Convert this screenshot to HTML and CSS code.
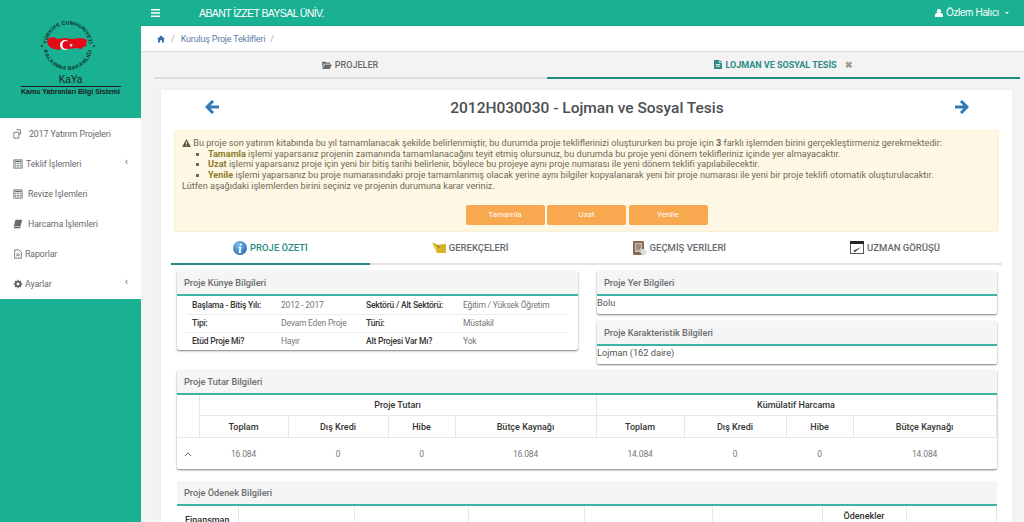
FILE: index.html
```html
<!DOCTYPE html>
<html lang="tr">
<head>
<meta charset="utf-8">
<title>Kuruluş Proje Teklifleri</title>
<link rel="stylesheet" href="styles.css">
</head>
<body>
<div class="app">
  <aside class="sidebar">
    <div class="brand">
      <svg class="emblem" viewBox="0 0 64 64" width="64" height="64">
        <defs>
          <path id="ringTop" d="M11 32.500 A21 21 0 0 1 53 32.500"/>
          <path id="ringBottom" d="M7.500 32.500 A24.500 24.500 0 0 0 56.500 32.500"/>
        </defs>
        <text class="ring-text"><textPath href="#ringTop" startOffset="50%" text-anchor="middle">TÜRKİYE CUMHURİYETİ</textPath></text>
        <text class="ring-text ring-low"><textPath href="#ringBottom" startOffset="50%" text-anchor="middle">KALKINMA BAKANLIĞI</textPath></text>
        <circle cx="6" cy="33" r="1" fill="#17352d"/>
        <circle cx="58" cy="33" r="1" fill="#17352d"/>
        <path d="M13 25l5-1 3 2 8-1 7 1 8-1 5 1 2 1-1 4 1 2-4 1-1 2-6-1-7 1-6-1-5 2-7-2-3-3-1-4z" fill="#e30a17"/>
        <circle cx="29" cy="32" r="5" fill="#fff"/>
        <circle cx="30.500" cy="32" r="4" fill="#e30a17"/>
        <path d="M35 30.200l.5 1.400 1.500 0-1.200.9.5 1.400-1.300-.9-1.200.9.5-1.400-1.200-.9 1.400 0z" fill="#fff"/>
      </svg>
      <div class="brand-name">KaYa</div>
      <div class="brand-sub">Kamu Yatırımları Bilgi Sistemi</div>
    </div>
    <nav class="menu">
      <a class="menu-item"><svg class="mi" viewBox="0 0 12 12"><path d="M4 1h5v5H7M1 4h6v7H1z" fill="none" stroke="#676a6c"/></svg><span class="gap-a">2017 Yatırım Projeleri</span></a>
      <a class="menu-item"><svg class="mi" viewBox="0 0 12 12"><path d="M1 1h10v10H1z" fill="#fff" stroke="#676a6c"/><path d="M2 2h8v2H2zM2 5h2v1H2zM5 5h2v1H5zM8 5h2v1H8zM2 7h2v1H2zM5 7h2v1H5zM8 7h2v1H8zM2 9h2v1H2zM5 9h2v1H5zM8 9h2v1H8z" fill="#676a6c"/></svg><span class="gap-b">Teklif İşlemleri</span><i class="caret">‹</i></a>
      <a class="menu-item"><svg class="mi" viewBox="0 0 12 12"><path d="M1 1h10v10H1z" fill="#fff" stroke="#676a6c"/><path d="M2 2h8v2H2zM2 5h2v1H2zM5 5h2v1H5zM8 5h2v1H8zM2 7h2v1H2zM5 7h2v1H5zM8 7h2v1H8zM2 9h2v1H2zM5 9h2v1H5zM8 9h2v1H8z" fill="#676a6c"/></svg><span class="gap-d">Revize İşlemleri</span></a>
      <a class="menu-item"><svg class="mi" viewBox="0 0 12 12"><path d="M3 1h8L9 9H1zM1 9.500h8v1.500H1z" fill="#676a6c"/></svg><span class="gap-d">Harcama İşlemleri</span></a>
      <a class="menu-item"><svg class="mi" viewBox="0 0 12 12"><path d="M2 1h5l3 3v7H2z" fill="none" stroke="#676a6c"/><path d="M4 6h4M4 8h4" stroke="#676a6c"/></svg><span class="gap-c">Raporlar</span></a>
      <a class="menu-item"><svg class="mi" viewBox="0 0 12 12"><circle cx="6" cy="6" r="2.800" fill="none" stroke="#5f6365" stroke-width="2.200"/><path d="M6 1v2M6 9v2M1 6h2M9 6h2M2.500 2.500l1.400 1.400M8.100 8.100l1.400 1.400M2.500 9.500l1.400-1.400M8.100 3.900l1.400-1.400" stroke="#5f6365" stroke-width="1.600"/></svg><span class="gap-c">Ayarlar</span><i class="caret">‹</i></a>
    </nav>
  </aside>

  <main class="main">
    <header class="topbar">
      <svg class="burger" viewBox="0 0 9 8" width="9" height="8"><path d="M0 0h9v1.600H0zM0 3.200h9v1.600H0zM0 6.400h9V8H0z" fill="#fff"/></svg>
      <span class="org">ABANT İZZET BAYSAL ÜNİV.</span>
      <span class="user">
        <svg viewBox="0 0 9 9" width="8" height="8"><circle cx="4.500" cy="2.400" r="2.400" fill="#fff"/><path d="M0 9V6.800C0 5.400 1.200 4.600 2.200 4.600h4.600C7.800 4.600 9 5.400 9 6.800V9z" fill="#fff"/></svg>
        Özlem Halıcı
        <i class="user-caret"></i>
      </span>
    </header>

    <div class="crumbs">
      <svg viewBox="0 0 10 9" width="8" height="8"><path d="M5 0L0 4.400h1.300V9h2.500V6h2.400v3h2.500V4.400H10z" fill="#3a6ea5"/></svg>
      <span class="sep">/</span>
      <a class="crumb-link">Kuruluş Proje Teklifleri</a>
      <span class="sep">/</span>
    </div>

    <div class="top-tabs">
      <a class="top-tab">
        <svg viewBox="0 0 12 10" width="10" height="8"><path d="M0 1h4l1 1h5v1.500H2.500L0 8zM3 4.500h9L9.500 10H0z" fill="#676a6c"/></svg>
        PROJELER
      </a>
      <a class="top-tab top-tab-active">
        <svg viewBox="0 0 9 10" width="8" height="9"><path d="M0 0h5.500v3H9v7H0zM6.300 0L9 2.300H6.300z" fill="#2a8c82"/><path d="M2 5h5M2 7h5" stroke="#fff"/></svg>
        LOJMAN VE SOSYAL TESİS
        <b class="tab-close">✖</b>
      </a>
    </div>

    <section class="card">
      <div class="title-row">
        <svg viewBox="0 0 14 14" width="14" height="14"><path d="M8 1L2 7l6 6M2.500 7H14" fill="none" stroke="#337ab7" stroke-width="3"/></svg>
        <h1>2012H030030 - Lojman ve Sosyal Tesis</h1>
        <svg viewBox="0 0 14 14" width="14" height="14"><path d="M6 1l6 6-6 6M11.500 7H0" fill="none" stroke="#337ab7" stroke-width="3"/></svg>
      </div>

      <div class="alert">
        <p><svg class="warn" viewBox="0 0 10 9" width="9" height="8"><path d="M5 0l5 9H0z" fill="#5f5a3f"/><path d="M5 3v3M5 7v1" stroke="#fdf7e3"/></svg> Bu proje son yatırım kitabında bu yıl tamamlanacak şekilde belirlenmiştir, bu durumda proje tekliflerinizi oluştururken bu proje için <b>3</b> farklı işlemden birini gerçekleştirmeniz gerekmektedir:</p>
        <ul>
          <li><b class="hl">Tamamla</b> işlemi yaparsanız projenin zamanında tamamlanacağını teyit etmiş olursunuz, bu durumda bu proje yeni dönem teklifleriniz içinde yer almayacaktır.</li>
          <li><b class="hl">Uzat</b> işlemi yaparsanız proje için yeni bir bitiş tarihi belirlenir, böylece bu projeye aynı proje numarası ile yeni dönem teklifi yapılabilecektir.</li>
          <li><b class="hl">Yenile</b> işlemi yaparsanız bu proje numarasındaki proje tamamlanmış olacak yerine aynı bilgiler kopyalanarak yeni bir proje numarası ile yeni bir proje teklifi otomatik oluşturulacaktır.</li>
        </ul>
        <p>Lütfen aşağıdaki işlemlerden birini seçiniz ve projenin durumuna karar veriniz.</p>
        <div class="alert-actions">
          <button class="btn">Tamamla</button>
          <button class="btn">Uzat</button>
          <button class="btn">Yenile</button>
        </div>
      </div>

      <div class="sub-tabs">
        <a class="sub-tab sub-tab-active">
          <svg viewBox="0 0 14 14" width="14" height="14"><defs><radialGradient id="infoG" cx=".4" cy=".3" r=".8"><stop offset="0" stop-color="#7fc0ee"/><stop offset="1" stop-color="#1766ad"/></radialGradient></defs><circle cx="7" cy="7" r="7" fill="url(#infoG)"/><path d="M7.800 2.500a1 1 0 1 1-.1 0zM5.500 6h3l-1 5h1v1H5.500l1-5h-1z" fill="#fff"/></svg>
          PROJE ÖZETİ
        </a>
        <a class="sub-tab">
          <svg viewBox="0 0 14 12" width="14" height="12"><path d="M0 1l5 2 9-1v9H5z" fill="#e8c93a"/><path d="M5 3l9-1v9H5z" fill="#d6b32a"/><path d="M0 0l7 4 1 2-2-1z" fill="#8a7a2a"/></svg>
          GEREKÇELERİ
        </a>
        <a class="sub-tab">
          <svg viewBox="0 0 14 14" width="14" height="14"><rect x="0" y="0" width="11" height="14" rx="1" fill="#8a6b50"/><rect x="2" y="2" width="7" height="9" fill="#c9bfae"/><path d="M3 4h5M3 6h5M3 8h4" stroke="#7a5c43"/><circle cx="10.500" cy="11" r="3" fill="#d8dde0"/></svg>
          GEÇMİŞ VERİLERİ
        </a>
        <a class="sub-tab">
          <svg viewBox="0 0 14 13" width="14" height="13"><rect x=".5" y=".5" width="13" height="12" fill="#fff" stroke="#555"/><rect width="14" height="3" fill="#23262a"/><path d="M3 10l8-4-6 5z" fill="#333"/></svg>
          UZMAN GÖRÜŞÜ
        </a>
      </div>

      <div class="tab-body">
        <div class="two-col">
          <article class="panel">
            <h2 class="panel-head">Proje Künye Bilgileri</h2>
            <table class="facts">
              <tr><th class="f1">Başlama - Bitiş Yılı:</th><td class="f2">2012 - 2017</td><th class="f3">Sektörü / Alt Sektörü:</th><td>Eğitim / Yüksek Öğretim</td></tr>
              <tr><th>Tipi:</th><td>Devam Eden Proje</td><th>Türü:</th><td>Müstakil</td></tr>
              <tr><th>Etüd Proje Mi?</th><td>Hayır</td><th>Alt Projesi Var Mı?</th><td>Yok</td></tr>
            </table>
          </article>
          <div class="stack">
            <article class="panel">
              <h2 class="panel-head">Proje Yer Bilgileri</h2>
              <div class="plain">Bolu</div>
            </article>
            <article class="panel">
              <h2 class="panel-head">Proje Karakteristik Bilgileri</h2>
              <div class="plain">Lojman (162 daire)</div>
            </article>
          </div>
        </div>

        <article class="panel panel-wide">
          <h2 class="panel-head">Proje Tutar Bilgileri</h2>
          <table class="grid">
            <colgroup>
              <col class="c22"><col class="c89"><col class="c100"><col class="c67"><col class="c141"><col class="c88"><col class="c102"><col class="c67"><col class="c143">
            </colgroup>
            <tr class="h1"><th rowspan="2"></th><th colspan="4">Proje Tutarı</th><th colspan="4">Kümülatif Harcama</th></tr>
            <tr class="h2"><th>Toplam</th><th>Dış Kredi</th><th>Hibe</th><th>Bütçe Kaynağı</th><th>Toplam</th><th>Dış Kredi</th><th>Hibe</th><th>Bütçe Kaynağı</th></tr>
            <tr class="d"><td><svg viewBox="0 0 10 6" width="8" height="5"><path d="M1 5l4-4 4 4" fill="none" stroke="#555" stroke-width="1.200"/></svg></td><td>16.084</td><td>0</td><td>0</td><td>16.084</td><td>14.084</td><td>0</td><td>0</td><td>14.084</td></tr>
          </table>
        </article>

        <article class="panel panel-wide panel-last">
          <h2 class="panel-head">Proje Ödenek Bilgileri</h2>
          <table class="grid grid-b">
            <colgroup>
              <col class="b61"><col class="b116"><col class="b114"><col class="b116"><col class="b128"><col class="b110"><col class="b84"><col class="b90">
            </colgroup>
            <tr><th class="fin">Finansman</th><th></th><th></th><th></th><th></th><th></th><th class="ode">Ödenekler</th><th></th></tr>
          </table>
        </article>
      </div>
    </section>
  </main>
</div>
</body>
</html>
```
FILE: styles.css
```css
* { box-sizing: border-box; }
html, body { margin: 0; height: 522px; overflow: hidden; }
body { font-family: Roboto, "Liberation Sans", sans-serif; color: #676a6c; font-size: 10px; background: #f3f3f4; }
a { color: inherit; text-decoration: none; }

.app { display: flex; height: 522px; overflow: hidden; }

/* sidebar */
.sidebar { width: 141px; flex: none; background: #1ab092; }
.brand { height: 118px; padding-top: 13px; display: flex; flex-direction: column; align-items: center; color: #1c1c1c; }
.emblem { display: block; flex: none; margin-right: 5px; }
.ring-text { font: 700 5.200px "Liberation Sans", sans-serif; fill: #0f2a24; letter-spacing: .1px; }
.ring-low { letter-spacing: .5px; }
.brand-name { font: 10px/11px "Liberation Sans", sans-serif; margin-top: -3px; height: 13px; width: 100px; text-align: center; border-bottom: 1px solid #1c1c1c; }
.brand-sub { font: 700 7px/10px "Liberation Sans", sans-serif; white-space: nowrap; }
.menu { background: #fff; padding-top: 1px; }
.menu-item { display: flex; align-items: center; height: 30px; padding-left: 13px; padding-right: 13px; font-size: 8.800px; letter-spacing: -.1px; color: #676a6c; white-space: nowrap; }
.mi { width: 10px; height: 10px; flex: none; }
.gap-a { margin-left: 6px; }
.gap-b { margin-left: 3px; }
.gap-c { margin-left: 2px; }
.gap-d { margin-left: 5px; }
.caret { margin-left: auto; font-style: normal; font-size: 11px; line-height: 10px; margin-top: -5px; }

/* main */
.main { flex: 1; min-width: 0; }
.topbar { height: 26px; display: flex; align-items: center; background: #1ab092; color: #fff; font: 10.500px "Liberation Sans", sans-serif; padding-left: 10px; padding-right: 15px; border-bottom: 1px solid #17a488; }
.burger { flex: none; }
.org { margin-left: 39px; letter-spacing: -.6px; }
.user { margin-left: auto; display: flex; align-items: center; gap: 3px; font-size: 10px; letter-spacing: -.35px; }
.user-caret { margin-left: 3px; border: 2.500px solid transparent; border-top-color: #fff; border-bottom: 0; }

.crumbs { height: 26px; background: #fff; border-bottom: 1px solid #ddd; display: flex; align-items: center; padding-left: 16px; font-size: 9px; }
.crumbs svg { margin-right: 6px; }
.crumb-link { color: #5b7ba6; margin: 0 5px 0 6px; letter-spacing: -.2px; }
.sep { color: #aaa; }

.top-tabs { display: flex; height: 27px; padding-left: 13px; padding-right: 4px; }
.top-tab { flex: 392 1 0; display: flex; align-items: center; justify-content: center; gap: 3px; font-size: 9px; font-weight: 500; border-bottom: 2px solid #dcdcdc; }
.top-tab-active { flex: 473 1 0; margin-left: 1px; color: #2a8c82; border-bottom-color: #1f8a7d; font-weight: 700; }
.tab-close { color: #999; margin-left: 5px; font-size: 9px; }

.card { margin: 11px 12px 0 20px; background: #fff; height: 460px; padding: 0 10px 0 10px; box-shadow: 0 0 2px rgba(0,0,0,.06); overflow: hidden; }
.title-row { height: 40px; display: flex; align-items: center; padding: 0 33px 6px 34px; }
.title-row svg { flex: none; }
h1 { flex: 1; margin: 2px 0 0; text-align: center; font-size: 15.500px; line-height: 22px; font-weight: 500; color: #4c4f52; }

.alert { margin: 0 3px; height: 102px; background: #fdf7e3; border: 1px solid #faf0d4; border-radius: 2px; padding: 7px 7px 0; font-size: 9.150px; line-height: 10.700px; color: #6e6a5a; }
.alert p { margin: 0; }
.alert ul { margin: 0; padding-left: 26px; list-style: square; }
.warn { vertical-align: -1px; }
.hl { color: #8f7c2e; }
.alert-actions { display: flex; justify-content: center; gap: 2.500px; margin-top: 13px; }
.btn { width: 79px; height: 20px; padding: 0; border: 0; border-radius: 2px; background: #f8a94f; color: #fff; font: 8px Roboto, sans-serif; }

.sub-tabs { display: flex; height: 33px; }
.sub-tab { flex: 1 1 auto; display: flex; align-items: center; justify-content: center; gap: 3px; font-size: 9.500px; font-weight: 500; border-bottom: 2px solid #e5e5e5; white-space: nowrap; }
.sub-tab-active { color: #2a8c82; border-bottom-color: #1f8a7d; }

.tab-body { padding: 6px 5px 0 6px; }
.two-col { display: grid; grid-template-columns: 401px 400px; column-gap: 19px; align-items: start; }
.stack { display: flex; flex-direction: column; gap: 7px; }
.panel { background: #fff; box-shadow: 0 1px 2px rgba(0,0,0,.5); border-radius: 2px; }
.panel-wide { margin-top: 6px; }
.panel-last { margin-top: 12px; box-shadow: none; }
.panel-head { margin: 0; height: 25px; padding: 0 7px; background: #f5f5f5; border-bottom: 2px solid #3fb3a6; font-size: 9.200px; line-height: 23px; font-weight: 500; color: #6a6d70; }
.plain { height: 18px; font-size: 9.200px; line-height: 13px; color: #555; }

.facts { border-collapse: collapse; margin-left: 9px; width: 381px; table-layout: fixed; font-size: 8.500px; letter-spacing: -.2px; }
.facts th { text-align: left; font-weight: 500; color: #333; height: 18px; padding: 0 0 0 6px; white-space: nowrap; }
.facts td { padding: 0; white-space: nowrap; color: #777; }
.facts tr + tr th, .facts tr + tr td { border-top: 1px solid #eee; }
.facts .f1 { width: 95px; }
.facts .f2 { width: 79px; }
.facts .f3 { width: 103px; }

.grid { width: 819px; border-collapse: collapse; table-layout: fixed; font-size: 9px; text-align: center; }
.grid th { font-weight: 500; color: #333; border: 1px solid #e8e8e8; border-top: 0; padding: 0; }
.grid th:first-child { border-left: 0; }
.grid td { color: #777; padding: 2px 0 0; height: 32px; font-size: 8.500px; letter-spacing: -.15px; }
.grid .h1 th { height: 20px; }
.grid .h2 th { height: 22px; padding-top: 1px; }
.grid-b th { height: 30px; vertical-align: top; }
.grid-b .fin { padding-top: 9px; }
.grid-b .ode { padding-top: 5px; }
.c22 { width: 22px; } .c89 { width: 89px; } .c100 { width: 100px; } .c67 { width: 67px; }
.c141 { width: 141px; } .c88 { width: 88px; } .c102 { width: 102px; } .c143 { width: 143px; }
.b61 { width: 61px; } .b116 { width: 116px; } .b114 { width: 114px; } .b128 { width: 128px; }
.b110 { width: 110px; } .b84 { width: 84px; } .b90 { width: 90px; }
```
